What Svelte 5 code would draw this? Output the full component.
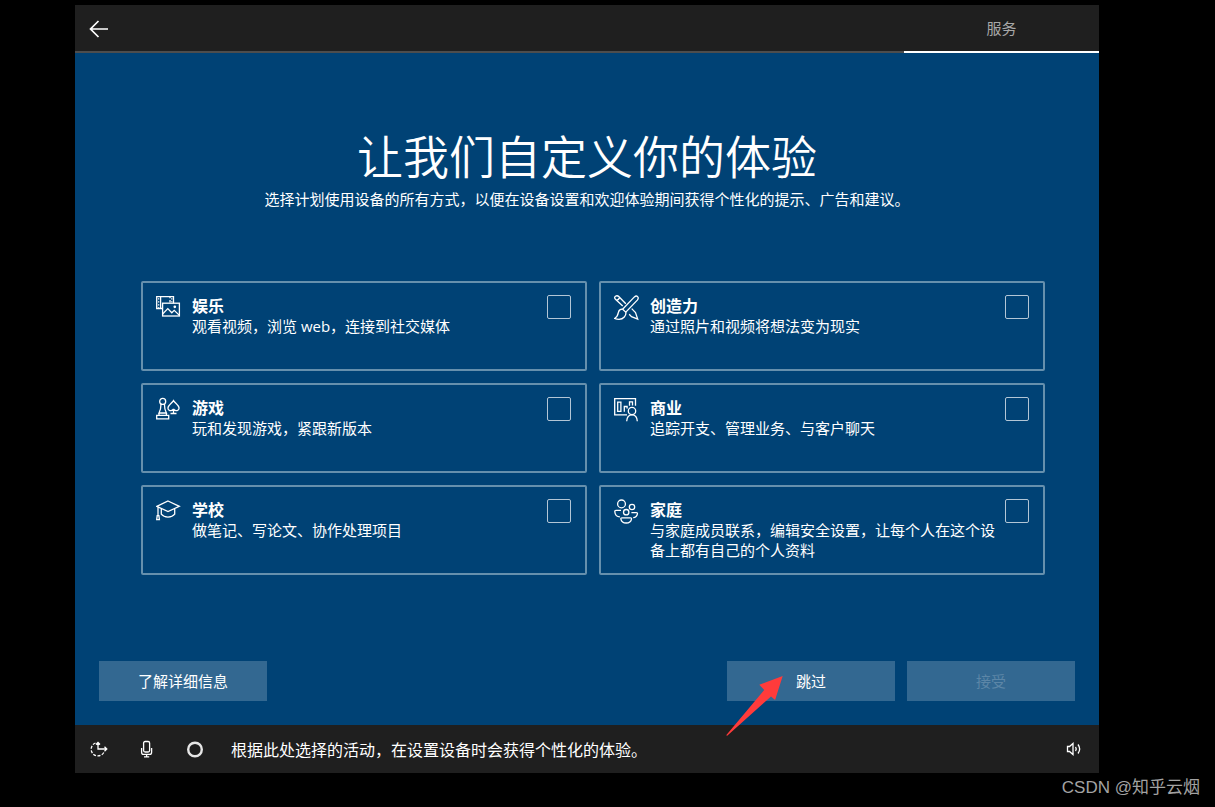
<script>
  const options = $state([
    { id: 'fun', title: '娱乐', text: '观看视频，浏览 web，连接到社交媒体', checked: false },
    { id: 'create', title: '创造力', text: '通过照片和视频将想法变为现实', checked: false },
    { id: 'games', title: '游戏', text: '玩和发现游戏，紧跟新版本', checked: false },
    { id: 'business', title: '商业', text: '追踪开支、管理业务、与客户聊天', checked: false },
    { id: 'school', title: '学校', text: '做笔记、写论文、协作处理项目', checked: false },
    { id: 'family', title: '家庭', text: '与家庭成员联系，编辑安全设置，让每个人在这个设备上都有自己的个人资料', checked: false }
  ]);
  const ready = $derived(options.some((o) => o.checked));
</script>

<div class="page">
  <div class="device">
    <header>
      <button class="icon-button" aria-label="返回">
        <svg class="back" width="20" height="20" viewBox="0 0 20 20"><path d="M19 10H1.5M9.5 2L1.5 10l8 8" /></svg>
      </button>
      <a class="tab" href="#services">服务</a>
    </header>

    <main>
      <h1>让我们自定义你的体验</h1>
      <p class="lead">选择计划使用设备的所有方式，以便在设备设置和欢迎体验期间获得个性化的提示、广告和建议。</p>

      <div class="options">
        {#each options as option (option.id)}
          <label class="card" for={option.id}>
            <svg class="glyph" width="26" height="26" viewBox="0 0 26 26">
              {#if option.id === 'fun'}
                <path d="M6.500 13.500H.7V1.600h16.800v6.600M4.600 1.600v11.900M14 1.600v1.600M14 5v2.500" />
                <path d="M2.600 3.300v10M15.800 3.300v4" stroke-dasharray="1.300 1.700" />
                <rect x="6.600" y="8.200" width="16.800" height="12.800" />
                <path d="M6.600 19l5.200-5.400 4 4.200 2.400-2.400 5.200 5" />
                <circle cx="18.800" cy="11.800" r=".7" />
              {:else if option.id === 'create'}
                <path d="M23.600 1.600c-1-1-2.200-.6-3.200.3L8.600 14.200l3.200 3L23.300 5.100c1-1.100 1.200-2.500.3-3.500z" />
                <path d="M8.600 14.200c-2.300-.2-3.800 1.100-4.200 3.200-.4 2.300-1.200 4.500-3.800 6.100 3.600 1.200 7.600.9 9.700-1.500 1.300-1.500 1.800-3.200 1.500-4.800" />
                <path d="M8.700 11L1.700 4.600C.2 3.200.4 2.200 1.500 1.300 2.700.4 3.700.5 5 1.800l6.800 7M2.600 5.400C4 5 5 4 5.700 2.600M15.200 19.300l2.300 2.300 6.200 2.500-2.200-6.500-3.800-4" />
              {:else if option.id === 'games'}
                <circle cx="6.700" cy="4.400" r="3" />
                <path d="M5 7c0 3.700-.3 5.800-2 9h7.400c-1.700-3.200-2-5.300-2-9M3 16v2.300M10.400 16v2.300M.7 21.800v-3.500h12v3.500z" />
                <path d="M17.500 3.600c-2 3.200-5.600 4.400-5.600 7.500 0 2.600 3.400 3.600 5.200 1.300h.8c1.800 2.300 5.200 1.300 5.200-1.300 0-3.100-3.600-4.300-5.600-7.500zM17.500 12.500v3.800M14.500 16.500h6" />
              {:else if option.id === 'business'}
                <path d="M13 17.800H.7V1.600h20.800v7.200M3.700 5.200h3.200v9.100H3.700zM10.300 14.800V9.500h2.800v2M15.500 8.800V4.800h3v3.800" />
                <circle cx="18" cy="14" r="3.700" />
                <path d="M12.700 24.200c.2-4 2.200-6.400 5.300-6.400s5.100 2.400 5.300 6.400" />
              {:else if option.id === 'school'}
                <path d="M12 2L23.300 7.300 12 12.600.8 7.300zM5.300 10v5.200c2.900 3.800 10.500 3.800 13.400 0V10M2 8.100v8.500M.7 20.700l.5-4h1.700l.5 4z" />
              {:else}
                <circle cx="7.500" cy="4.900" r="3.900" />
                <circle cx="18" cy="8" r="2.700" />
                <circle cx="12.200" cy="13.200" r="2.700" />
                <path d="M7 11.400H2c-.9 0-1.300.5-1.200 1.300.3 3.200 2.200 5.100 5.100 5.200M17.400 13.600h4.900c.9 0 1.300.5 1.100 1.300-.4 2.400-1.900 3.600-4.200 3.700M8 18.800h8.400c.9 0 1.300.5 1.100 1.300-.5 2.500-2.400 3.900-5.300 3.900s-4.800-1.400-5.300-3.900c-.2-.8.2-1.300 1.100-1.300z" />
              {/if}
            </svg>
            <span class="copy">
              <strong>{option.title}</strong>
              <span>{option.text}</span>
            </span>
            <input id={option.id} type="checkbox" bind:checked={option.checked} />
          </label>
        {/each}
      </div>

      <div class="actions">
        <button class="action">了解详细信息</button>
        <div class="group">
          <button class="action">
            跳过
            <svg class="pointer" width="58" height="62" viewBox="0 0 58 62" aria-hidden="true">
              <path d="M56.700 1L33.300 9.700l4.900 5.200L.2 60.300l1 .5L45 21.400l4.100 3.500z" />
            </svg>
          </button>
          <button class="action" disabled={!ready}>接受</button>
        </div>
      </div>
    </main>

    <footer>
      <button class="icon-button" aria-label="轻松使用">
        <svg width="18" height="18" viewBox="0 0 18 18">
          <path d="M8 3v6h8.500M14.500 6.700L16.800 9l-2.300 2.300M6 4.500L8 2.400l2 2.100" />
          <path d="M5.500 3A6.700 6.700 0 1 0 14 12" stroke-dasharray="3 1.500" />
        </svg>
      </button>
      <button class="icon-button" aria-label="麦克风">
        <svg width="18" height="18" viewBox="0 0 18 18">
          <rect x="5.600" y="1.500" width="6" height="10.500" rx="1.500" />
          <path d="M3.600 8v4.200c0 1.400.7 2.200 2 2.200h6c1.300 0 2-.8 2-2.200V8M8.600 14.400v2.500M6 16.900h5.200" />
        </svg>
      </button>
      <button class="icon-button" aria-label="小娜">
        <svg width="18" height="18" viewBox="0 0 18 18"><circle class="ring" cx="9" cy="9.500" r="6.800" /></svg>
      </button>
      <p>根据此处选择的活动，在设置设备时会获得个性化的体验。</p>
      <button class="icon-button" aria-label="音量">
        <svg width="18" height="18" viewBox="0 0 18 18">
          <path d="M1.500 6.500h2L7 3.500v11l-3.500-3h-2zM9.500 7c.9 1.200.9 2.800 0 4M12 4.500c2 2.700 2 6.300 0 9" />
        </svg>
      </button>
    </footer>
  </div>
  <div class="credit">CSDN @知乎云烟</div>
</div>

<style>
  :global(body) {
    margin: 0;
    background: #000;
  }
  .page {
    position: relative;
    box-sizing: border-box;
    display: flex;
    min-height: 100vh;
    padding: 5px 116px 34px 75px;
    color: #fff;
    font-family: 'Open Sans', 'Noto Sans CJK SC', sans-serif;
    font-size: 15px;
    line-height: 20px;
  }
  .device {
    flex: 1;
    display: flex;
    flex-direction: column;
    background: #004275;
  }
  header {
    display: flex;
    justify-content: space-between;
    height: 48px;
    background: linear-gradient(#4d4d4d, #4d4d4d) bottom / 100% 2px no-repeat #1f1f1f;
  }
  .tab {
    box-sizing: border-box;
    width: 195px;
    border-bottom: 2px solid #fff;
    color: #a8a8a8;
    line-height: 46px;
    text-align: center;
    text-decoration: none;
  }
  button {
    border: 0;
    padding: 0;
    color: inherit;
    font: inherit;
  }
  .icon-button {
    display: grid;
    place-items: center;
    width: 48px;
    height: 48px;
    background: none;
  }
  svg {
    display: block;
    fill: none;
    stroke: #fff;
    stroke-width: 1.3;
  }
  .back {
    stroke-width: 1.7;
  }
  main {
    flex: 1;
    display: flex;
    flex-direction: column;
    padding: 73px 24px 24px;
  }
  h1 {
    margin: 0;
    font-family: 'Noto Sans CJK SC', sans-serif;
    font-size: 46px;
    font-weight: 350;
    line-height: 56px;
    text-align: center;
  }
  .lead {
    margin: 7px 0 72px;
    text-align: center;
  }
  .options {
    display: grid;
    grid-template-columns: 1fr 1fr;
    gap: 12px;
    padding: 0 30px 0 42px;
  }
  .card {
    box-sizing: border-box;
    display: flex;
    align-items: flex-start;
    min-height: 90px;
    padding: 12px 14px 12px 13px;
    border: 2px solid #6690ad;
    border-radius: 2px;
  }
  .glyph {
    flex: none;
    margin-right: 10px;
  }
  .copy {
    flex: 1;
    display: flex;
    flex-direction: column;
    padding: 1px 8px 0 0;
  }
  .copy strong {
    font-size: 16px;
    font-weight: 700;
  }
  input {
    appearance: none;
    flex: none;
    width: 24px;
    height: 24px;
    margin: 0;
    border: 1px solid #b3c6d6;
    border-radius: 2px;
  }
  input:checked {
    background: #fff;
    box-shadow: inset 0 0 0 4px #004275;
  }
  .actions,
  .group {
    display: flex;
    justify-content: space-between;
    gap: 12px;
  }
  .actions {
    margin-top: auto;
  }
  .action {
    position: relative;
    width: 168px;
    height: 40px;
    background: #336891;
  }
  .action:disabled {
    color: #5c86a7;
  }
  .pointer {
    position: absolute;
    top: 14px;
    left: -1px;
    pointer-events: none;
  }
  .pointer path {
    fill: #ff3b3b;
    stroke: none;
  }
  .ring {
    stroke: #e6e6e6;
    stroke-width: 2.4;
  }
  footer {
    display: flex;
    align-items: center;
    background: #1f1f1f;
  }
  footer p {
    flex: 1;
    margin: 0;
    padding: 2px 0 0 12px;
    font-size: 16px;
  }
  .credit {
    position: absolute;
    right: 15px;
    bottom: 7px;
    color: #a3a3a3;
    font-family: 'Liberation Sans', 'Noto Sans CJK SC', sans-serif;
    font-size: 17px;
    line-height: 24px;
  }
</style>
